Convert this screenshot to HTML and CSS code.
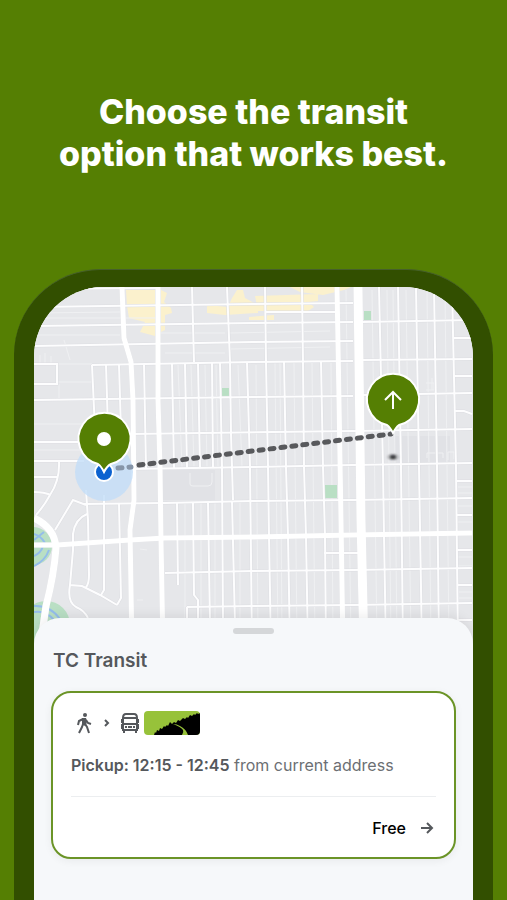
FILE: index.html
```html
<!DOCTYPE html>
<html lang="en">
<head>
    <meta charset="UTF-8">
    <meta name="viewport" content="width=device-width, initial-scale=1.0">
    <title>TC Transit</title>
    <link rel="stylesheet" href="styles.css">
</head>
<body>

<h1 class="headline">Choose the transit<br>option that works best.</h1>

<main class="phone">
    <div class="screen">

        <!-- Map -->
        <svg class="map" viewBox="34 287 439 361" preserveAspectRatio="xMidYMin slice" role="img" aria-label="Map of the route">
            <defs>
                <g id="streets">
                    <!-- Cross streets -->
                    <path d="M34 289L158 288M34 307L253 304L353 303M34 326L253 323L353 322M265 312H335M34 346L253 342L353 341M362 322L472 320"/>
                    <path d="M92 365L253 362L353 361M362 360L472 359M34 400L253 397L353 396M362 395L472 393M34 442H80M132 434L353 431L472 429"/>
                    <path d="M34 461H84M132 469L253 467L353 465L472 463M84 504L165 503L253 501L353 500L472 498"/>
                    <path d="M165 573L253 571L353 570L472 568M187 607L253 606L353 605L472 603M324 553H358"/>
                    <path d="M34 364H57V384H34M453 338H472M454 376H472M454 411H464L472 414M456 481H472M456 515H472M457 550H472M457 585H472M458 620H472"/>
                    <!-- Avenues -->
                    <path d="M192 287L194 362M227 287L230 362L231 434L233 500M265 287L266 361L268 467L269 536L271 648M302 287L303 361L304 467L306 536L308 648"/>
                    <path d="M92 365L95 430M106 365L108 430M119 365L121 430M144 364L146 468M172 364L174 468M185 364L187 468M198 363L200 468M212 363L213 468M220 363L222 468M247 362L250 467"/>
                    <path d="M284 361L286 467L288 536L290 648M321 361L323 467L325 536L326 648"/>
                    <path d="M379 287L383 467L384 536L386 648M398 287L401 467L403 648M416 287L419 467L422 648M434 287L437 467L439 648M452 287L456 467L458 648"/>
                    <path d="M177 503L178 585M193 503L194 595L198 600V625M208 502L210 625M222 467L223 625M232 501L235 625M250 467L252 648M187 607V625"/>
                    <!-- Neighbourhood by the river -->
                    <path d="M59 461Q60 480 50 495Q44 506 36 515M34 477H57M34 492Q44 492 51 495M55 530L73 500L86 505M86 490L88 520L89 575Q89 584 86 587M87 514Q75 519 73 534V550L70 585L82 586L100 595L117 605"/>
                    <path d="M104 495V590L101 595M119 503L121 598L117 605M70 585Q67 602 76 607Q84 610 88 618"/>
                </g>
                <g id="main-roads">
                    <path class="arterial" d="M122 287L124 338L131 362L133 400L134 500L130 530L132 648M158 287L158 400L160 467L161 540L163 648M337 287L339 400L341 520L343 648"/>
                    <path class="arterial" d="M34 545L57 545L130 540L165 538L253 537L353 535L472 533"/>
                    <path class="river-road" d="M34 518Q55 528 56 548Q54 575 46 606L40 648"/>
                    <path class="boulevard" d="M358 287L360 440L361 520L364 648"/>
                </g>
                <filter id="soft" x="-50%" y="-50%" width="200%" height="200%">
                    <feGaussianBlur stdDeviation="1"/>
                </filter>
            </defs>

            <rect class="land" x="34" y="287" width="439" height="361"/>
            <path class="campus" d="M394 436H450V463H394zM163 470H215V500H163z"/>
            <path class="shops" d="M126 290H155V336L140 332L145 322L129 318L127 306zM161 290L167 293L164 302L171 308L172 313L165 315V330L161 332zM207 305L228 307L232 298L237 290L243 290L245 298L258 305V313L225 315L207 313zM249 317L274 315V320H249zM255 296L318 294V301L309 302L314 307L308 311H258zM290 287H351L344 290L323 295L300 292z"/>
            <circle class="park" cx="33" cy="546" r="19"/>
            <circle class="park" cx="46" cy="625" r="24"/>
            <path class="water" d="M34 534Q41 536 45 543M34 540L44 532M34 566Q45 561 49 550M34 606Q50 605 60 619M34 556Q41 553 43 546M34 612Q46 610 54 620"/>

            <!-- Alleys -->
            <path class="alley" d="M34 313L120 312M34 318H160M34 335H120M64 340L70 360M160 333H225M230 333L330 331M230 349L330 347M165 353H225M34 364H92M57 382H92M59 384V400M34 424H85M40 355V364M45 353V364M51 356V364M34 450H80"/>
            <path class="alley" d="M178 365L182 467M191 365L194 467M205 365L207 467M216 365L218 467M238 365L242 467M256 365L258 640M275 363L278 640M280 363L282 640M294 363L297 640M312 363L315 640M331 363L333 640M346 290L351 640"/>
            <path class="alley" d="M372 290L377 640M387 290L391 640M393 290L397 640M406 290L411 640M427 290L431 640M445 290L449 640M185 503V640M201 503V640M215 503V640M240 503V640M458 487H472M458 493H472M458 506H472M458 522H472M458 557H472M458 566H472M458 592H472M458 598H472M140 549L147 550M137 600H143"/>
            <path class="alley" d="M190 473V484Q190 486 193 486H208Q212 486 212 482V473M427 458V453H443V458M448 460V452H454V459M426 383H434V390H426M432 378V390"/>

            <path class="park" d="M222 388H230V396H222zM364 311H371V320H364zM324 485H337V498H324z"/>

            <use href="#streets" class="street-edge"/>
            <use href="#main-roads" class="street-edge"/>
            <use href="#streets" class="street"/>
            <use href="#main-roads" class="road"/>

            <!-- Route -->
            <circle class="halo" cx="104" cy="472" r="29"/>
            <path class="route route-start" d="M118 468L131 467"/>
            <path class="route" d="M139 465L391 434"/>
            <circle class="location" cx="104" cy="472" r="9"/>
            <ellipse class="target" cx="393" cy="457" rx="6" ry="3" filter="url(#soft)"/>
            <ellipse class="target-dot" cx="393" cy="457" rx="3" ry="2" filter="url(#soft)"/>

            <!-- Pins -->
            <path class="pin" d="M98 464A26 26 0 1 1 111 464Q107 466 104 472Q101 466 98 464z"/>
            <circle class="pin-dot" cx="104" cy="439" r="7"/>
            <path class="pin" d="M387 425A26 26 0 1 1 399 425Q396 427 393 433Q390 427 387 425z"/>
            <path class="pin-arrow" d="M393 409V392M385 400L393 392L401 400"/>
        </svg>

        <!-- Bottom sheet -->
        <section class="sheet">
            <button class="handle" type="button" aria-label="Expand"></button>
            <h2 class="sheet-title">TC Transit</h2>

            <article class="card">
                <div class="modes">
                    <svg class="icon-walk" viewBox="0 0 16 22" aria-hidden="true">
                        <circle cx="9" cy="3" r="2"/>
                        <path d="M9 12L11 15L13 21M7 12L6 15L3 21M7 7L3 9L2 13M10 8L12 11L15 12"/>
                        <path class="body" d="M6 6H10L11 9L10 14L6 13z"/>
                    </svg>
                    <svg class="icon-next" viewBox="0 0 6 10" aria-hidden="true">
                        <path d="M1 2L4 5L1 8"/>
                    </svg>
                    <svg class="icon-bus" viewBox="0 0 20 22" aria-hidden="true">
                        <path d="M3 18V6Q3 2 6 2H14Q17 2 17 6V18zM3 6H17M3 12H17M2 7V11M18 7V11M2 12V17M18 12V17M4 18V21M16 18V21"/>
                        <path class="lights" d="M5 15H7M13 15H15M8 15H12"/>
                    </svg>
                    <svg class="brand" viewBox="0 0 56 24" role="img" aria-label="TC Transit">
                        <rect class="brand-bg" width="56" height="24"/>
                        <path d="M10 24L11 21L12 22L13 19L15 20L16 17L18 18L20 15L21 16L23 14L24 15L26 11L28 13L30 11L32 12L34 9L36 10L38 8L39 7L41 8L43 6L44 7L46 4L48 5L50 3L51 4L53 2L54 3L56 2V24z"/>
                        <path class="brand-bg" d="M29 13Q37 16 39 19Q40 21 38 24H44Q42 18 36 15Q33 13 29 13z"/>
                    </svg>
                </div>
                <p class="pickup"><strong>Pickup: 12:15 - 12:45</strong> from current address</p>
                <a class="fare" href="#">
                    <span>Free</span>
                    <svg class="icon-arrow" viewBox="0 0 14 14" aria-hidden="true">
                        <path d="M1 7H12M7 2L12 7L7 12"/>
                    </svg>
                </a>
            </article>
        </section>
    </div>
</main>

</body>
</html>
```

FILE: styles.css
```css
/* General Styles */
* {
    box-sizing: border-box;
}

body {
    margin: 0;
    min-height: 100vh;
    display: flex;
    flex-direction: column;
    font-family: 'Inter', 'Liberation Sans', sans-serif;
    background-color: #557f03;
    color: #55585c;
}

.headline {
    margin: 0;
    padding: 91px 16px 94px;
    font-size: 34px;
    line-height: 42px;
    font-weight: 800;
    text-align: center;
    color: #fff;
}

/* Phone */
.phone {
    flex: 1;
    display: flex;
    margin: 0 14px;
    padding: 17px 20px 0;
    background-color: #324f00;
    border-top: 1px solid #46602a;
    border-radius: 86px 86px 0 0;
}

.screen {
    flex: 1;
    min-width: 0;
    display: flex;
    flex-direction: column;
    overflow: hidden;
    border-radius: 70px 70px 0 0;
    background-color: #f6f8fa;
}

/* Map */
.map {
    display: block;
    width: 100%;
    height: 361px;
    fill: none;
}

.land {
    fill: #e6e7ea;
}

.campus {
    fill: #e1e2e6;
}

.shops {
    fill: #fbf1cd;
}

.park {
    fill: #b9dfc4;
}

.water {
    stroke: #94bdea;
    stroke-width: 2;
}

.alley {
    stroke: #eff0f2;
    stroke-width: 1;
}

.street {
    stroke: #fdfdfe;
    stroke-width: 2;
}

.street-edge {
    stroke: #dddee2;
    stroke-width: 3;
}

.road {
    stroke: #fff;
}

.arterial {
    stroke-width: 5;
}

.river-road {
    stroke-width: 7;
}

.boulevard {
    stroke-width: 9;
}

.halo {
    fill: #c3ddf8;
    fill-opacity: 0.8;
}

.route {
    stroke: #58595c;
    stroke-width: 5;
    stroke-linecap: round;
    stroke-dasharray: 4 7;
}

.route-start {
    stroke: #8695a8;
}

.location {
    fill: #0c62d0;
    stroke: #fff;
    stroke-width: 2;
}

.target {
    fill: #b5b6b9;
}

.target-dot {
    fill: #343538;
}

.pin {
    fill: #557f03;
    stroke: #fff;
    stroke-width: 2;
}

.pin-dot {
    fill: #fff;
}

.pin-arrow {
    stroke: #fff;
    stroke-width: 2;
}

/* Bottom Sheet */
.sheet {
    position: relative;
    flex: 1;
    display: flex;
    flex-direction: column;
    margin-top: -30px;
    padding: 10px 17px 40px;
    background-color: #f6f8fa;
    border-radius: 26px 26px 0 0;
    box-shadow: 0 -2px 12px rgba(0, 0, 0, 0.08);
}

.handle {
    align-self: center;
    width: 41px;
    height: 6px;
    padding: 0;
    border: none;
    border-radius: 3px;
    background-color: #d5d7d9;
    cursor: pointer;
}

.sheet-title {
    margin: 15px 2px 18px;
    font-size: 19px;
    line-height: 24px;
    font-weight: 600;
}

/* Trip Card */
.card {
    padding: 17px 18px;
    background-color: #fff;
    border: 2px solid #6b9427;
    border-radius: 20px;
    box-shadow: 0 2px 8px rgba(0, 0, 0, 0.06);
}

.modes {
    display: flex;
    align-items: center;
    height: 26px;
    padding-left: 5px;
}

.modes svg {
    fill: none;
    stroke: #55585c;
    stroke-width: 2;
}

.modes .icon-walk {
    width: 16px;
    height: 22px;
    margin-right: 12px;
}

.icon-walk circle,
.icon-walk .body {
    fill: #55585c;
    stroke: none;
}

.icon-next {
    width: 6px;
    height: 10px;
    margin-right: 10px;
}

.icon-bus {
    width: 20px;
    height: 22px;
    margin-right: 4px;
}

.modes .brand {
    width: 56px;
    height: 24px;
    border-radius: 4px;
    fill: #000;
    stroke: none;
}

.brand-bg {
    fill: #97c23a;
}

.pickup {
    margin: 0;
    padding: 17px 0 19px;
    border-bottom: 1px solid #eceef0;
    font-size: 16px;
    line-height: 24px;
    color: #6c6f73;
}

.pickup strong {
    font-weight: 600;
    color: #55585c;
}

.fare {
    display: flex;
    justify-content: flex-end;
    align-items: center;
    gap: 14px;
    padding: 19px 2px 0 0;
    font-size: 16px;
    line-height: 24px;
    font-weight: 500;
    color: #000;
    text-decoration: none;
}

.icon-arrow {
    width: 14px;
    height: 14px;
    fill: none;
    stroke: #55585c;
    stroke-width: 2;
}
```
